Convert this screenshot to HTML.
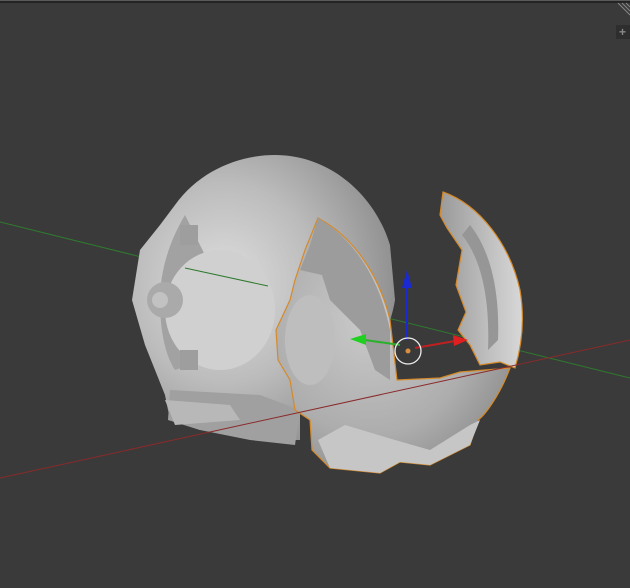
<!DOCTYPE html>
<html><head><style>html,body{margin:0;padding:0;background:#3a3a3a;width:630px;height:588px;overflow:hidden}</style></head>
<body>
<svg width="630" height="588" viewBox="0 0 630 588" xmlns="http://www.w3.org/2000/svg" style="display:block">
<defs>
<radialGradient id="g1" cx="0.35" cy="0.45" r="0.7">
<stop offset="0" stop-color="#dedede"/><stop offset="0.5" stop-color="#bcbcbc"/><stop offset="1" stop-color="#8a8a8a"/>
</radialGradient>
<radialGradient id="g2" cx="0.4" cy="0.4" r="0.75">
<stop offset="0" stop-color="#cacaca"/><stop offset="0.6" stop-color="#adadad"/><stop offset="1" stop-color="#858585"/>
</radialGradient>
<linearGradient id="g3" x1="0" y1="0" x2="1" y2="0">
<stop offset="0" stop-color="#9a9a9a"/><stop offset="0.6" stop-color="#c0c0c0"/><stop offset="1" stop-color="#d8d8d8"/>
</linearGradient>
</defs>
<rect x="0" y="0" width="630" height="588" fill="#3a3a3a"/>
<rect x="0" y="0" width="630" height="1" fill="#5a5a5a"/>
<rect x="0" y="1" width="630" height="2" fill="#242424"/>
<rect x="616" y="25" width="14" height="14" fill="#2e2e2e"/>
<text x="619" y="36" font-family="Liberation Sans, sans-serif" font-size="12" fill="#888" font-weight="bold">+</text>
<path d="M618 3 L630 15 M622 3 L630 11 M626 3 L630 7" stroke="#888" stroke-width="1"/>
<line x1="0" y1="222" x2="630" y2="378" stroke="#2f7a2f" stroke-width="1"/>
<path d="M175 205 C200 170 240 155 275 155 C330 155 375 195 390 245 L395 300 C385 360 340 400 300 410 L300 440 L260 440 L240 425 L200 430 L170 420 L165 395 L155 370 L145 345 L132 300 L140 250 L160 225 Z" fill="url(#g1)"/>
<path d="M185 215 C170 240 160 270 160 300 C160 330 165 355 175 370 L190 365 L185 330 L190 290 L205 255 Z" fill="#a2a2a2"/>
<ellipse cx="220" cy="310" rx="55" ry="60" fill="#d0d0d0"/>
<circle cx="165" cy="300" r="18" fill="#aaaaaa"/><circle cx="160" cy="300" r="8" fill="#c2c2c2"/>
<rect x="180" y="225" width="18" height="20" fill="#9e9e9e"/>
<rect x="180" y="350" width="18" height="20" fill="#9e9e9e"/>
<path d="M170 390 L260 395 L300 410 L295 445 L250 440 L200 430 L168 420 Z" fill="#a0a0a0"/>
<path d="M165 400 L230 405 L240 420 L175 425 Z" fill="#b8b8b8"/>
<line x1="185" y1="268" x2="268" y2="286" stroke="#2f7a2f" stroke-width="1"/>
<path d="M318 218 C350 235 378 270 390 320 L397 380 L440 378 L460 372 L510 368 C500 395 485 415 478 420 L470 445 L430 465 L400 462 L380 473 L330 468 L312 450 L310 420 L295 410 L290 380 L278 360 L276 330 L290 300 L295 280 L305 250 Z" fill="url(#g2)" stroke="#d58a2a" stroke-width="1.2"/>
<path d="M318 218 L310 245 L300 270 L322 275 L330 300 L360 330 L375 370 L390 380 L390 330 C380 280 355 240 318 218 Z" fill="#9c9c9c"/>
<ellipse cx="310" cy="340" rx="25" ry="45" fill="#bebebe"/>
<path d="M318 440 L345 425 L395 440 L430 450 L470 425 L480 420 L470 445 L430 465 L400 462 L380 473 L330 468 Z" fill="#c6c6c6"/>
<path d="M443 192 C480 205 510 245 520 290 C525 320 522 345 515 368 L500 362 L480 365 L470 345 L458 330 L466 312 L456 285 L462 250 L447 228 L440 215 Z" fill="url(#g3)" stroke="#d58a2a" stroke-width="1.2"/>
<path d="M470 225 C490 250 500 290 498 340 L488 350 C490 300 482 260 462 235 Z" fill="#969696"/>
<line x1="0" y1="478" x2="630" y2="340" stroke="#8a2a2a" stroke-width="1"/>
<line x1="407" y1="340" x2="407" y2="285" stroke="#1a2ad0" stroke-width="2"/>
<path d="M402 288 L407 270 L412 288 Z" fill="#1a2ad0"/>
<line x1="400" y1="345" x2="365" y2="340" stroke="#2ab02a" stroke-width="2"/>
<path d="M366 334 L350 339 L366 345 Z" fill="#20d020"/>
<line x1="415" y1="348" x2="455" y2="341" stroke="#c02020" stroke-width="2"/>
<path d="M453 335 L468 340 L454 346 Z" fill="#e02020"/>
<circle cx="408" cy="351" r="13" fill="none" stroke="#eee" stroke-width="1.3"/>
<circle cx="408" cy="351" r="2.5" fill="#d89040"/>
</svg>
</body></html>
